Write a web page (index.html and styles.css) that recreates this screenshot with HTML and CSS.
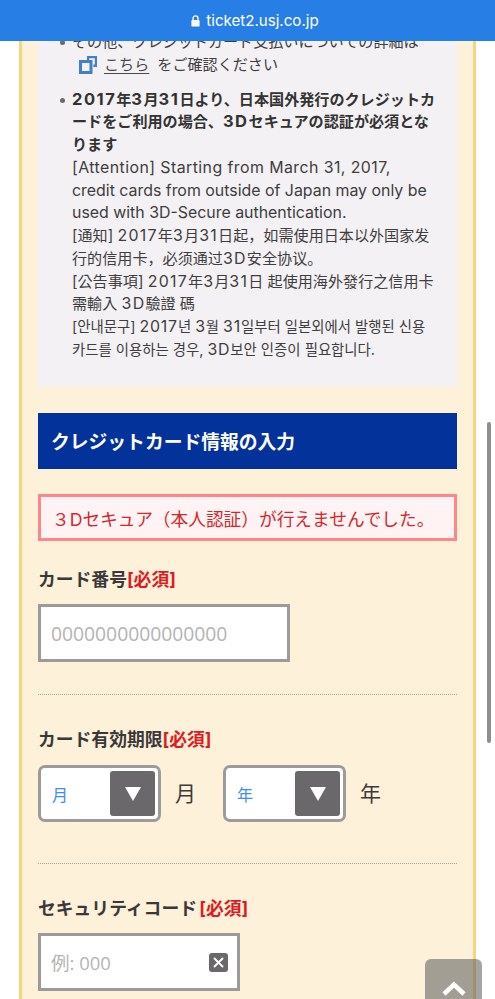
FILE: index.html
```html
<!DOCTYPE html>
<html lang="ja">
<head>
<meta charset="utf-8">
<title>ticket2.usj.co.jp</title>
<link rel="stylesheet" href="styles.css">
</head>
<body>
<div class="page">
  <header class="urlbar">
    <svg class="lock" width="9" height="12" viewBox="0 0 9 12"><path d="M2 5.500V3.400C2 1.900 3 .9 4.500.9S7 1.900 7 3.400v2.100" fill="none" stroke="#fff" stroke-width="1.300"/><rect x="0.400" y="5" width="8.200" height="6.600" rx="1.200" fill="#fff"/></svg>
    <span>ticket2.usj.co.jp</span>
  </header>
  <main class="panel">
    <section class="notice">
      <ul class="notes">
        <li>その他、クレジットカード支払いについての詳細は<br>
          <svg class="ext" width="19" height="19" viewBox="0 0 19 19"><path d="M8 1h10v11h-3.600V9.600h1.400V3.200H10.200V5H8z" fill="#3f80c9"/><path d="M1.500 6.500h10.500v11H1.500z" fill="none" stroke="#3f80c9" stroke-width="3"/></svg><a class="link" href="#">こちら</a><span class="after-link">をご確認ください</span>
        </li>
        <li><strong><span class="num">2017</span>年<span class="num">3</span>月<span class="num">31</span>日より、日本国外発行のクレジットカ<br>ードをご利用の場合、<span class="num">3D</span>セキュアの認証が必須とな<br>ります</strong><br>
          <span class="en"><span class="en-first">[Attention] Starting from March 31, 2017,</span><br>
          credit cards from outside of Japan may only be<br>
          used with 3D-Secure authentication.</span><br>
          <span lang="zh-CN" class="sc">[通知] <span class="num">2017</span>年<span class="num">3</span>月<span class="num">31</span>日起，如需使用日本以外国家发<br>行的信用卡，必须通过<span class="num">3D</span>安全协议。</span><br>
          <span lang="zh-TW" class="tc">[公告事項] <span class="num">2017</span>年<span class="num">3</span>月<span class="num">31</span>日 起使用海外發行之信用卡<br>需輸入 <span class="num">3D</span>驗證 碼</span><br>
          <span lang="ko" class="kr">[안내문구] <span class="num">2017</span>년 <span class="num">3</span>월 <span class="num">31</span>일부터 일본외에서 발행된 신용<br>카드를 이용하는 경우, <span class="num">3D</span>보안 인증이 필요합니다.</span>
        </li>
      </ul>
    </section>

    <h2 class="heading">クレジットカード情報の入力</h2>
    <p class="error">３Dセキュア（本人認証）が行えませんでした。</p>

    <div class="field">
      <label class="label">カード番号<em class="req">[必須]</em></label>
      <input class="input input-card" type="text" placeholder="0000000000000000">
    </div>
    <hr class="rule">
    <div class="field">
      <label class="label label-dates">カード有効期限<em class="req">[必須]</em></label>
      <div class="dates">
        <div class="select"><span class="select-text">月</span><span class="select-btn"><i class="tri"></i></span></div>
        <span class="unit">月</span>
        <div class="select"><span class="select-text">年</span><span class="select-btn"><i class="tri"></i></span></div>
        <span class="unit">年</span>
      </div>
    </div>
    <hr class="rule rule-wide">
    <div class="field">
      <label class="label label-code">セキュリティコード <em class="req">[必須]</em></label>
      <div class="input input-code">
        <input class="bare" type="text" placeholder="例: 000">
        <svg class="clear" width="19" height="19" viewBox="0 0 19 19"><rect width="19" height="19" rx="3" fill="#6a686b"/><path d="M5 5l9 9M14 5l-9 9" stroke="#fff" stroke-width="1.800" fill="none"/></svg>
      </div>
    </div>
  </main>
  <button class="totop" type="button" aria-label="top">
    <svg width="26" height="16" viewBox="0 0 26 16"><path d="M3 14l10-9.500 10 9.500" fill="none" stroke="#fff" stroke-width="4.500"/></svg>
  </button>
  <div class="scrollbar"></div>
</div>
</body>
</html>
```

FILE: styles.css
```css
* { box-sizing: border-box; }
html, body { margin: 0; padding: 0; background: #fff; }
body {
  font-family: Inter, "Noto Sans CJK JP", sans-serif;
  color: #3f3d3f;
}
.page {
  position: relative;
  width: 495px;
  height: 999px;
  overflow: hidden;
}
.urlbar {
  position: absolute;
  top: 0; left: 0; right: 0;
  z-index: 2;
  height: 41px;
  padding-left: 15px;
  background: #277fe5;
  color: #fff;
  display: flex;
  align-items: center;
  justify-content: center;
  gap: 6px;
  font: 400 15.100px/1 Inter, "Liberation Sans", sans-serif;
}
.panel {
  width: 457px;
  margin-left: 19px;
  padding: 29px 16px 0;
  background: #fdf1d9;
  border-left: 3px solid #f8d47e;
  border-right: 3px solid #f8d47e;
  height: 999px;
}
.notice {
  background: #f3f1f4;
  height: 358px;
  padding-top: 2px;
}
.notes {
  list-style: none;
  margin: 0;
  padding: 0 0 0 34px;
  font-size: 15.100px;
  line-height: 22.750px;
}
.notes li { position: relative; margin-bottom: 12px; }
.notes li::before {
  content: "";
  position: absolute;
  left: -12px;
  top: 9px;
  width: 5px;
  height: 5px;
  border-radius: 50%;
  background: #6c6a6c;
}
.notes strong { font-weight: 700; color: #333; }
.num { font-size: 15.900px; letter-spacing: 1.300px; line-height: 0; }
strong .num { font-size: 16.500px; letter-spacing: 1.500px; }
.en { font-size: 15.900px; line-height: 0; }
.en-first { letter-spacing: .43px; }
.ext { margin: 0 6px 0 7px; vertical-align: -4px; }
.link { color: #4a484a; text-decoration: underline; text-underline-offset: 3px; }
.after-link { margin-left: 8px; }
.sc { font-family: Inter, "Noto Sans CJK SC", sans-serif; line-height: 0; }
.tc { font-family: Inter, "Noto Sans CJK TC", sans-serif; line-height: 0; }
.kr { font-family: Inter, "Noto Sans CJK KR", sans-serif; font-size: 14.400px; line-height: 0; }
.kr .num { letter-spacing: .8px; }
.heading {
  display: flex;
  align-items: center;
  margin: 26px 0 0;
  height: 56px;
  padding: 4px 0 0 13px;
  background: #03339a;
  color: #fff;
  font-size: 18.800px;
  font-weight: 700;
  line-height: 1;
}
.error {
  display: flex;
  align-items: center;
  margin: 25px 0 0;
  height: 47px;
  border: 3px solid #fe8589;
  padding: 4px 0 0 11px;
  background: #fff3f4;
  color: #d3272d;
  font-size: 17.700px;
  line-height: 1;
}
.field { display: block; }
.label {
  display: block;
  margin: 0 0 11px;
  padding-top: 2px;
  font-size: 17.800px;
  font-weight: 700;
  line-height: 26px;
  color: #3a383a;
}
.label-dates { margin-bottom: 12px; }
.label-code { word-spacing: -2px; }
.req { font-style: normal; color: #e01b1f; }
.error + .field { margin-top: 24px; }
.input {
  display: block;
  height: 58px;
  border: 3px solid #9c9a9b;
  background: #fff;
  border-radius: 0;
  outline: none;
  padding: 0 10px;
  font-family: "Open Sans", sans-serif;
  font-size: 19.300px;
  color: #333;
}
.input::placeholder, .bare::placeholder { color: #b5b3b4; opacity: 1; }
.input-card { width: 252px; }
.rule {
  margin: 32px 0 30px;
  height: 0;
  border: 0;
  border-top: 1px dotted #a8a49c;
}
.rule-wide { margin-top: 41px; }
.dates { display: flex; align-items: center; }
.select {
  display: flex;
  align-items: center;
  justify-content: space-between;
  width: 123px;
  height: 57px;
  border: 3px solid #9c9a9b;
  border-radius: 7px;
  background: #fff;
  padding: 0 3px 0 11px;
}
.select-text { color: #3f8fe6; font-size: 16px; }
.select-btn {
  display: flex;
  align-items: center;
  justify-content: center;
  width: 45px;
  height: 45px;
  background: #6a686b;
  border-radius: 3px;
}
.tri {
  width: 0; height: 0;
  border-left: 8px solid transparent;
  border-right: 8px solid transparent;
  border-top: 14px solid #fff;
}
.unit {
  width: 62px;
  padding-left: 14px;
  font-size: 21px;
  line-height: 1;
  color: #3c3a3c;
}
.input-code {
  width: 202px;
  display: flex;
  align-items: center;
  padding: 0 9px 0 10px;
}
.bare {
  flex: 1;
  min-width: 0;
  border: 0;
  outline: 0;
  padding: 0;
  background: transparent;
  font-family: "Open Sans", "Noto Sans CJK JP", sans-serif;
  font-size: 18.500px;
}
.clear { flex: none; }
.totop {
  position: absolute;
  left: 425px;
  top: 959px;
  width: 57px;
  height: 60px;
  border: 0;
  padding: 21px 0 0;
  display: flex;
  justify-content: center;
  align-items: flex-start;
  background: rgba(90, 90, 90, .55);
  border-radius: 6px 6px 0 0;
}
.scrollbar {
  position: absolute;
  left: 487px;
  top: 422px;
  width: 4px;
  height: 321px;
  border-radius: 2px;
  background: #8e8e8e;
}
```
